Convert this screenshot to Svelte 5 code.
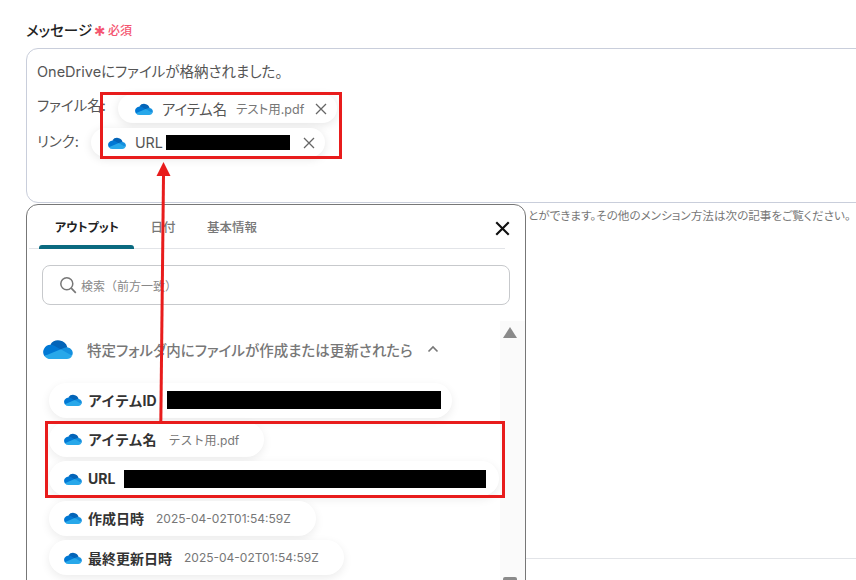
<script lang="ts">
  const outputs = [
    { name: 'アイテムID', mask: 274, gap: 10 },
    { name: 'アイテム名', value: 'テスト用.pdf', gap: 12 },
    { name: 'URL', mask: 362, gap: 9, wide: true },
    { name: '作成日時', value: '2025-04-02T01:54:59Z', gap: 12 },
    { name: '最終更新日時', value: '2025-04-02T01:54:59Z', gap: 12 },
  ];
</script>

{#snippet cloud(w: number, h: number)}
  <svg class="cloud" width={w} height={h} viewBox="0 3.5 24 16.5" preserveAspectRatio="none" aria-hidden="true">
    <path d="M14.5 15l4.95-4.734A7.5 7.5 0 0 0 5.932 8.03C6 8 14.5 15 14.5 15z" fill="#0364b8" />
    <path d="M9.155 9.147A5.97 5.97 0 0 0 6 8.25c-.023 0-.045 0-.068.002A6 6 0 0 0 1.09 17.45l7.41-.7 5.69-4.59z" fill="#0078d4" />
    <path d="M19.45 10.266a4.9 4.9 0 0 0-.325-.016 4.85 4.85 0 0 0-1.94.405L14.25 11.89l3.23 3.99 5.78 1.4a4.875 4.875 0 0 0-3.81-7.014z" fill="#1490df" />
    <path d="M19.125 20H6a5.99 5.99 0 0 1-4.91-2.55L14.25 11.89l9.01 5.39A4.87 4.87 0 0 1 19.125 20z" fill="#28a8ea" />
  </svg>
{/snippet}

{#snippet cross(size: number, stroke: string, weight: number)}
  <svg width={size} height={size} viewBox="0 0 12 12" aria-hidden="true">
    <path d="M1 1l10 10M11 1L1 11" fill="none" stroke={stroke} stroke-width={weight} />
  </svg>
{/snippet}

<div class="page">
  <div class="label">
    <span class="label-text">メッセージ</span>
    <span class="star">*</span>
    <span class="required">必須</span>
  </div>

  <div class="message">
    <p class="line first">OneDriveにファイルが格納されました。</p>
    <div class="line">
      <span class="line-label name">ファイル名:</span>
      <span class="chip">
        {@render cloud(18, 12)}
        <span class="chip-name">アイテム名</span>
        <span class="chip-value">テスト用.pdf</span>
        <span class="chip-x">{@render cross(12, '#666', 1.3)}</span>
      </span>
    </div>
    <div class="line">
      <span class="line-label link">リンク:</span>
      <span class="chip">
        {@render cloud(18, 12)}
        <span class="chip-name">URL</span>
        <span class="chip-mask"></span>
        <span class="chip-x wide">{@render cross(12, '#666', 1.3)}</span>
      </span>
    </div>
  </div>

  <div class="lower">
    <section class="panel">
      <div class="tabs">
        <span class="tab active">アウトプット</span>
        <span class="tab">日付</span>
        <span class="tab">基本情報</span>
        <span class="close">{@render cross(15, '#111', 1.7)}</span>
      </div>

      <div class="search">
        <svg width="18" height="18" viewBox="0 0 18 18" aria-hidden="true">
          <circle cx="7.8" cy="7.8" r="6" fill="none" stroke="#777" stroke-width="1.5" />
          <path d="M12.2 12.2l4.6 4.6" stroke="#777" stroke-width="1.7" />
        </svg>
        <span>検索（前方一致）</span>
      </div>

      <div class="scroll">
        <div class="list">
          <div class="group">
            {@render cloud(30, 20)}
            <span class="group-title">特定フォルダ内にファイルが作成または更新されたら</span>
            <svg class="chevron" width="12" height="8" viewBox="0 0 12 8" aria-hidden="true">
              <path d="M1.5 6.5L6 2l4.5 4.5" fill="none" stroke="#777" stroke-width="1.6" />
            </svg>
          </div>
          {#each outputs as item}
            <div class="pill" class:wide={item.wide} style:gap="{item.gap}px">
              <span class="pill-head">
                {@render cloud(18, 12)}
                <span class="pill-name">{item.name}</span>
              </span>
              {#if item.mask}
                <span class="mask" style:width="{item.mask}px"></span>
              {:else}
                <span class="pill-value">{item.value}</span>
              {/if}
            </div>
          {/each}
        </div>
        <div class="scrollbar">
          <span class="arrow-up"></span>
          <span class="thumb"></span>
        </div>
      </div>
    </section>

    <aside class="side">
      <p class="hint">とができます。その他のメンション方法は次の記事をご覧ください。</p>
      <div class="rule"></div>
    </aside>
  </div>

  <!-- annotations drawn on top of the screenshot -->
  <div class="mark mark-top"></div>
  <div class="mark mark-bottom"></div>
  <svg class="pointer" width="20" height="262" viewBox="0 0 20 262" aria-hidden="true">
    <path d="M11.5 14L8.8 262" stroke="#e81c1c" stroke-width="3" />
    <path d="M11.5 0L18.5 14H4.5z" fill="#e81c1c" />
  </svg>
</div>

<style>
  :global(body) {
    margin: 0;
    background: #fff;
  }

  .page {
    position: relative;
    width: 856px;
    height: 580px;
    overflow: hidden;
    padding: 19px 0 0 26px;
    box-sizing: border-box;
    font-family: Inter, "Noto Sans CJK JP", sans-serif;
    font-feature-settings: "palt";
    color: #555;
  }

  .label {
    display: flex;
    align-items: center;
    height: 20px;
    margin-bottom: 9px;
  }

  .label-text {
    font-size: 14.5px;
    font-weight: 500;
    color: #222;
  }

  .star {
    margin: 8px 0 0 1px;
    width: 10px;
    height: 14px;
    font-size: 24px;
    font-weight: 700;
    line-height: 20px;
    color: #f4546f;
  }

  .required {
    margin-left: 5px;
    font-size: 12px;
    font-weight: 500;
    color: #f4546f;
  }

  .message {
    width: 860px;
    height: 155px;
    box-sizing: border-box;
    padding: 12px 10px;
    border: 1px solid #c9cedb;
    border-radius: 12px;
    font-size: 14.5px;
    color: #555;
  }

  .line {
    display: flex;
    align-items: center;
    gap: 12px;
    margin: 5px 0 0;
    height: 29px;
  }

  .line.first {
    height: 18px;
    margin: 0 0 15px;
  }

  .line-label.name {
    margin-bottom: 8px;
  }

  .line-label.link {
    margin-bottom: 4px;
  }

  .chip {
    display: inline-flex;
    align-items: center;
    height: 29px;
    padding: 0 10px 0 17px;
    border-radius: 15px;
    background: #fff;
    box-shadow: 0 2px 10px rgba(0, 0, 0, 0.1);
  }

  .chip-name {
    margin-left: 9px;
    font-size: 14.3px;
    color: #555;
  }

  .chip-value {
    margin-left: 9px;
    font-size: 12.5px;
    color: #777;
  }

  .chip-mask {
    width: 124px;
    height: 15px;
    margin-left: 3px;
    background: #000;
  }

  .chip-x {
    display: flex;
    margin-left: 11px;
  }

  .chip-x.wide {
    margin-left: 13px;
  }

  .lower {
    display: flex;
    margin-top: 1px;
  }

  .panel {
    flex: none;
    width: 500px;
    height: 420px;
    box-sizing: border-box;
    border: 1px solid #777;
    border-radius: 12px;
    background: #fff;
  }

  .tabs {
    display: flex;
    align-items: center;
    position: relative;
    height: 40px;
    margin: 0 20px 0 2px;
    padding: 3px 0 0 26px;
    gap: 31.5px;
    border-bottom: 1px solid #e2e4e8;
    font-size: 12.5px;
    font-weight: 500;
    color: #777;
  }

  .tab {
    line-height: 40px;
  }

  .tab.active {
    color: #222;
    font-size: 12px;
    font-weight: 700;
  }

  .tab.active::after {
    content: "";
    position: absolute;
    left: 10px;
    bottom: -1px;
    width: 95px;
    height: 4px;
    border-radius: 3px 3px 0 0;
    background: #0a6a80;
  }

  .close {
    display: flex;
    margin-left: auto;
    margin-right: -5px;
  }

  .search {
    display: flex;
    align-items: center;
    gap: 4px;
    height: 40px;
    box-sizing: border-box;
    margin: 16px 15px 16px 15px;
    padding-left: 16px;
    border: 1px solid #c7c9cc;
    border-radius: 8px;
    font-size: 12px;
    font-feature-settings: normal;
    color: #888;
  }

  .scroll {
    display: flex;
    height: 300px;
  }

  .list {
    flex: 1;
    min-width: 0;
    padding: 0 0 0 16px;
    font-feature-settings: normal;
  }

  .group {
    display: flex;
    align-items: center;
    height: 40px;
    margin: 8px 0 13.5px;
    font-size: 14.5px;
    font-weight: 500;
    font-feature-settings: "palt";
    color: #777;
  }

  .group-title {
    margin-left: 14px;
  }

  .chevron {
    margin-left: 14px;
  }

  .pill {
    display: flex;
    align-items: center;
    width: fit-content;
    height: 35px;
    margin: 0 0 4.4px 6px;
    padding: 0 11px 0 15px;
    border-radius: 18px;
    background: #fff;
    box-shadow: 0 3px 10px rgba(0, 0, 0, 0.08);
  }

  .pill.wide {
    width: 450px;
    box-sizing: border-box;
  }

  .pill-head {
    display: flex;
    align-items: center;
    gap: 6px;
  }

  .pill-name {
    font-size: 14px;
    font-weight: 700;
    color: #333;
  }

  .pill-value {
    margin-right: 14px;
    font-size: 12px;
    color: #777;
  }

  .mask {
    flex: none;
    height: 18px;
    background: #000;
  }

  .scrollbar {
    flex: none;
    position: relative;
    width: 25px;
    background: #fafafa;
  }

  .arrow-up {
    position: absolute;
    left: 3px;
    top: 6px;
    border-left: 7px solid transparent;
    border-right: 7px solid transparent;
    border-bottom: 11px solid #8a8a8a;
  }

  .thumb {
    position: absolute;
    left: 3px;
    top: 256px;
    width: 14px;
    height: 12px;
    border-radius: 2px;
    background: #8a8a8a;
  }

  .side {
    flex: 1;
    min-width: 0;
    padding-left: 2px;
  }

  .hint {
    margin: 4px 0 0;
    font-size: 11.6px;
    line-height: 16px;
    white-space: nowrap;
    color: #777;
  }

  .rule {
    height: 1px;
    margin: 334px 0 0 -2px;
    background: #e2e4e8;
  }

  .mark {
    position: absolute;
    box-sizing: border-box;
    border: 3px solid #e81c1c;
  }

  .mark-top {
    left: 100px;
    top: 92px;
    width: 242px;
    height: 67px;
  }

  .mark-bottom {
    left: 45px;
    top: 421px;
    width: 460px;
    height: 77px;
  }

  .pointer {
    position: absolute;
    left: 152px;
    top: 162px;
  }
</style>
